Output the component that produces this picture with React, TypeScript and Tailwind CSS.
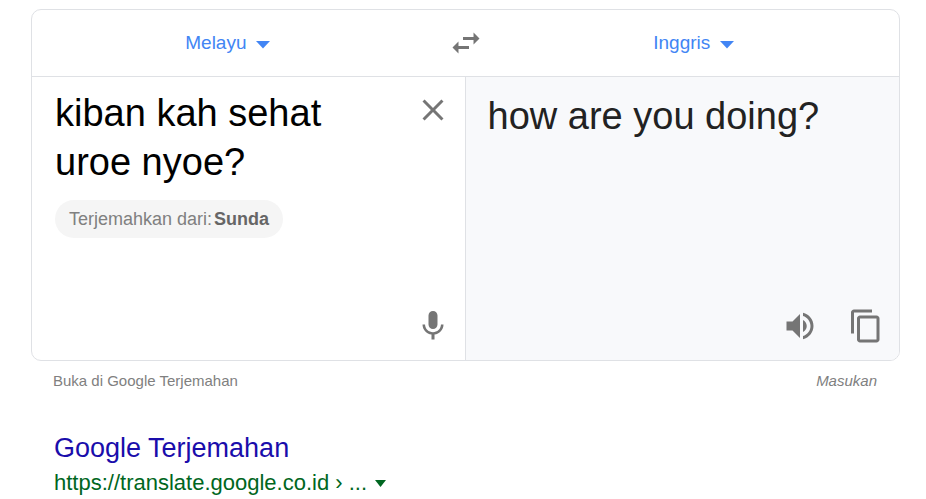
import { useState } from 'react';

const iconPaths = {
  swap: 'M6.99 11L3 15l3.99 4v-3H14v-2H6.99v-3zM21 9l-3.99-4v3H10v2h7.01v3L21 9z',
  close:
    'M19 6.41L17.59 5 12 10.59 6.41 5 5 6.41 10.59 12 5 17.59 6.41 19 12 13.41 17.59 19 19 17.59 13.41 12z',
  mic: 'M12 14c1.66 0 2.99-1.34 2.99-3L15 5c0-1.66-1.34-3-3-3S9 3.34 9 5v6c0 1.66 1.34 3 3 3zm5.3-3c0 3-2.54 5.1-5.3 5.1S6.7 14 6.7 11H5c0 3.41 2.72 6.23 6 6.72V21h2v-3.28c3.28-.48 6-3.3 6-6.72h-1.7z',
  volume:
    'M3 9v6h4l5 5V4L7 9H3zm13.5 3c0-1.77-1.02-3.29-2.5-4.03v8.05c1.48-.73 2.5-2.25 2.5-4.02zM14 3.23v2.06c2.89.86 5 3.54 5 6.71s-2.11 5.85-5 6.71v2.06c4.01-.91 7-4.49 7-8.77s-2.99-7.86-7-8.77z',
  copy: 'M16 1H4c-1.1 0-2 .9-2 2v14h2V3h12V1zm3 4H8c-1.1 0-2 .9-2 2v14c0 1.1.9 2 2 2h11c1.1 0 2-.9 2-2V7c0-1.1-.9-2-2-2zm0 16H8V7h11v14z',
};

type IconButtonProps = {
  icon: keyof typeof iconPaths;
  label: string;
  onClick?: () => void;
};

function IconButton({ icon, label, onClick }: IconButtonProps) {
  return (
    <button type="button" aria-label={label} onClick={onClick} className="size-9 shrink-0 cursor-pointer text-[#757575]">
      <svg viewBox="0 0 24 24" className="size-9" fill="currentColor">
        <path d={iconPaths[icon]} />
      </svg>
    </button>
  );
}

type LanguageSelectProps = {
  label: string;
  value: string;
};

function LanguageSelect({ label, value }: LanguageSelectProps) {
  return (
    <div className="relative flex items-center text-[#4285f4]">
      <select
        aria-label={label}
        defaultValue={value}
        className="cursor-pointer appearance-none bg-transparent pr-[23px] text-[19px] leading-6 outline-none"
      >
        <option value={value}>{value}</option>
      </select>
      <svg viewBox="0 0 14 8" className="pointer-events-none absolute right-0 bottom-1.5 h-2 w-[14px]" fill="currentColor">
        <path d="M0 0h14L7 7.5z" />
      </svg>
    </div>
  );
}

export default function App() {
  const [source, setSource] = useState('kiban kah sehat uroe nyoe?');

  return (
    <main className="bg-white pt-[9px] pr-[26px] pl-[31px] font-['Liberation_Sans',Arial,sans-serif]">
      <section className="overflow-hidden rounded-[10px] border border-[#dfe1e5]">
        {/* Language bar */}
        <div className="grid grid-cols-[1fr_36px_1fr] items-center border-b border-[#dfe1e5] py-[15px]">
          <div className="flex justify-center pr-6">
            <LanguageSelect label="Bahasa sumber" value="Melayu" />
          </div>
          <IconButton icon="swap" label="Tukar bahasa" />
          <div className="flex justify-center pl-[5px]">
            <LanguageSelect label="Bahasa target" value="Inggris" />
          </div>
        </div>

        {/* Source and result */}
        <div className="grid min-h-[283px] grid-cols-2">
          <div className="flex flex-col border-r border-[#dfe1e5] pt-3 pr-[14px] pb-4 pl-[23px]">
            <div className="flex items-start gap-3">
              <textarea
                aria-label="Teks sumber"
                rows={2}
                value={source}
                onChange={(e) => setSource(e.target.value)}
                className="block min-w-0 flex-1 resize-none overflow-hidden text-[38px] leading-[49px] text-black outline-none"
              />
              <div className="flex pt-[3px]">
                <IconButton icon="close" label="Hapus teks" onClick={() => setSource('')} />
              </div>
            </div>
            <button
              type="button"
              className="mt-[13px] flex cursor-pointer gap-0.5 self-start rounded-full bg-[#f5f5f5] px-[14px] py-[7px] text-[18px] leading-6 text-[#808080]"
            >
              <span>Terjemahkan dari:</span>
              <b className="text-[#666]">Sunda</b>
            </button>
            <div className="mt-auto flex justify-end">
              <IconButton icon="mic" label="Masukan suara" />
            </div>
          </div>

          <div className="flex flex-col bg-[#f8f9fb] pt-[15px] pr-[15px] pb-4 pl-[22px]">
            <p className="text-[38px] leading-[49px] text-[#222]">how are you doing?</p>
            <div className="mt-auto flex justify-end gap-[30px]">
              <IconButton icon="volume" label="Dengarkan" />
              <IconButton icon="copy" label="Salin" />
            </div>
          </div>
        </div>
      </section>

      <div className="flex justify-between pt-[10px] pr-[23px] pl-[22px] text-[15px] leading-5 text-[#808080]">
        <a href="#translate">Buka di Google Terjemahan</a>
        <a href="#feedback" className="italic">
          Masukan
        </a>
      </div>

      {/* Search result */}
      <article className="pt-[39px] pl-[23px]">
        <h3 className="text-[27px] leading-9 text-[#1a0dab]">
          <a href="#result">Google Terjemahan</a>
        </h3>
        <div className="flex items-center gap-2 pt-px text-[22px] leading-8 text-[#006621]">
          <cite className="not-italic">https://translate.google.co.id › ...</cite>
          <button type="button" aria-label="Opsi hasil" className="cursor-pointer">
            <svg viewBox="0 0 11 8" className="h-2 w-[11px]" fill="currentColor">
              <path d="M0 1h11L5.5 8z" />
            </svg>
          </button>
        </div>
      </article>
    </main>
  );
}
